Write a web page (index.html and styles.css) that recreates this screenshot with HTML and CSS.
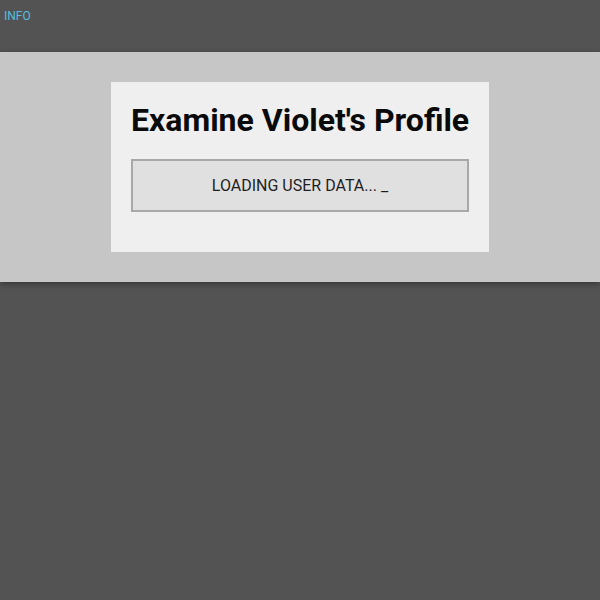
FILE: index.html
```html
<!DOCTYPE html>
<html>
<head>
<meta charset="utf-8">
<link rel="stylesheet" href="styles.css">
</head>
<body>
<header class="topbar"><a class="info">INFO</a></header>
<section class="band">
  <div class="card">
    <h1 class="title">Examine Violet's Profile</h1>
    <div class="loading">LOADING USER DATA... _</div>
  </div>
</section>
</body>
</html>
```
FILE: styles.css
```css
html, body {
  margin: 0;
  padding: 0;
  background: #535353;
  font-family: Roboto, "Liberation Sans", sans-serif;
  height: 100%;
}
.topbar {
  height: 52px;
  padding: 8px 0 0 4px;
  box-sizing: border-box;
}
.info {
  display: block;
  font-size: 12px;
  line-height: 16px;
  color: #52bfe0;
}
.band {
  background: #c6c6c6;
  height: 230px;
  padding-top: 30px;
  box-sizing: border-box;
  box-shadow: 0 2px 6px rgba(0,0,0,0.35);
}
.card {
  width: 378px;
  height: 170px;
  margin: 0 auto;
  background: #efefef;
  padding: 20px 20px 0;
  box-sizing: border-box;
}
.title {
  margin: 0 0 21px;
  font-size: 32px;
  line-height: 36px;
  font-weight: 700;
  text-align: center;
  color: #0a0a0a;
  white-space: nowrap;
}
.loading {
  height: 53px;
  border: 2px solid #a8a8a8;
  background: #e0e0e0;
  box-sizing: border-box;
  display: flex;
  align-items: center;
  justify-content: center;
  font-size: 16px;
  color: #1e1e1e;
}
```
